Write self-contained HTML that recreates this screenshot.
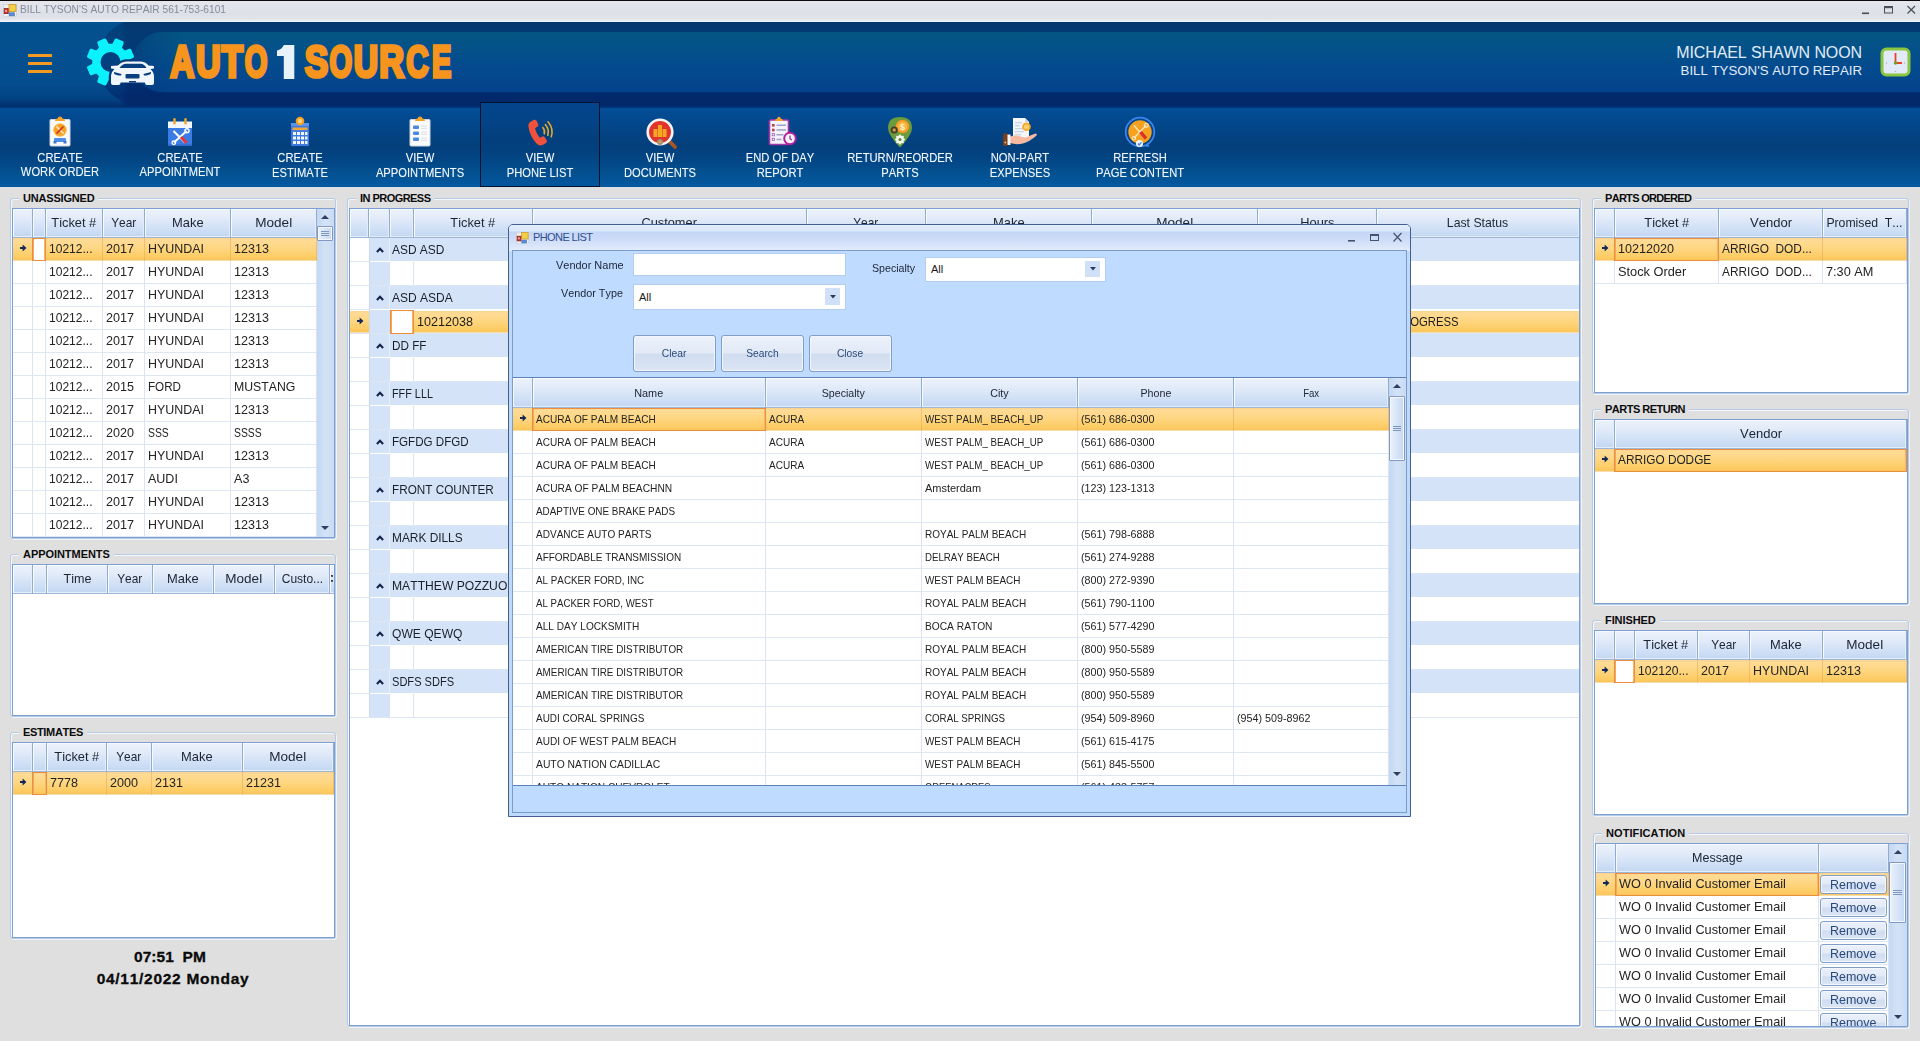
<!DOCTYPE html>
<html><head><meta charset="utf-8"><title>Auto 1 Source</title><style>
*{box-sizing:border-box;margin:0;padding:0}
html,body{width:1920px;height:1041px;overflow:hidden}
body{position:relative;background:#dfdfdf;font-family:"Liberation Sans",sans-serif;font-size:13px;color:#1c1c1c;font-kerning:none}
.a{position:absolute}
.x{display:inline-block;transform-origin:0 50%;white-space:pre}
.xc{display:inline-block;transform-origin:50% 50%;white-space:pre}
/* title bar */
#tb{left:0;top:0;width:1920px;height:22px;background:linear-gradient(#e4e6ec 0,#dde0e8 60%,#e2e4ea 85%,#eef6fc 100%);border-top:1px solid #0a0a0a}
#tb .t{left:20px;top:1px;font-size:11px;color:#848c98;line-height:14px;white-space:pre}
/* header */
#hd{left:0;top:22px;width:1920px;height:86px;background:linear-gradient(#03386c 0,#033a73 12px,#033878 40px,#022c6e 68px,#02296b 72px,#02286a 83px,#03377c 86px)}
#hdl{left:0;top:22px;width:128px;height:86px;background:linear-gradient(#04518f 0,#044d8e 62px,#034384 76px,#02316f 84px,#03377c 86px);-webkit-mask-image:linear-gradient(90deg,#000 0,#000 120px,transparent 128px);mask-image:linear-gradient(90deg,#000 0,#000 120px,transparent 128px)}
#hdc{left:0;top:22px;width:300px;height:86px;background:linear-gradient(#03386c 0,#033a73 12px,#033a7a 40px,#022c6e 68px,#02296b 72px,#02286a 83px,#03377c 86px);clip-path:circle(43px at 140px 40px);opacity:.7}
#pill{left:133px;top:32px;width:1787px;height:60px;border-radius:30px 0 0 30px;background:linear-gradient(90deg,rgba(3,56,118,.6),rgba(3,56,118,.25) 22px,rgba(3,56,118,0) 50px),linear-gradient(#045582 0,#04518a 18px,#044a8e 36px,#04438c 60px);box-shadow:0 0 2px rgba(4,75,140,.8)}
#tl{left:0;top:108px;width:1920px;height:79px;background:linear-gradient(#034e97 0,#03498e 12px,#034180 30px,#033f7b 38px,#034585 52px,#03508f 64px,#0459a2 79px)}
.ti{top:108px;width:120px;height:79px;text-align:center;color:#f2f8ff;font-size:13px;line-height:15px}
.ti .l{position:absolute;left:-40px;width:200px;top:42px;text-align:center;white-space:pre;transform:scaleX(.86);text-shadow:0 0 1px rgba(255,255,255,.35)}
.ti svg{position:absolute}
#sel{left:480px;top:102px;width:120px;height:85px;border:1px solid #04122e;background:linear-gradient(#03458c 0,#034488 14px,#033f7c 38px,#03427f 50px,#034f90 70px,#0457a0 84px)}
/* group boxes */
.gb{border:1px solid #b5cbe6;border-radius:3px;box-shadow:inset 1px 1px 0 #f4f7fb, 1px 1px 0 #f0f3f8}
.gt{font-weight:700;font-size:11px;line-height:13px;background:#dfdfdf;padding:0 4px 0 4px;white-space:pre;color:#0c0c0c;letter-spacing:-.2px}
.grid{border:1px solid #7d9fd2;background:#fff;overflow:hidden}
.h{top:0;height:29px;background:linear-gradient(#edf3fc 0,#e1eaf8 35%,#d0e0f6 70%,#c3d7f2 100%);border-right:1px solid #92abd0;border-bottom:1px solid #9eb6d8;box-shadow:inset 1px 1px 0 #f7faff,inset -1px -1px 0 #e4edfa;text-align:center;line-height:28px;font-size:13px;color:#1c2433;white-space:pre;overflow:hidden}
.r{left:0;height:23px;border-bottom:1px solid #dde6f3}
.c{top:0;height:23px;border-right:1px solid #dbe5f2;line-height:22px;padding-left:3px;white-space:pre;overflow:hidden;font-size:13px;color:#232323}

.sel{background:linear-gradient(#fbd38f 0,#fedb96 10%,#fed680 50%,#fdcb62 88%,#fbc45c 100%);border-bottom:1px solid #f5dfae}
.sel .c{border-right-color:rgba(230,170,90,.55)}
.foc{border:1px solid #ee8e3c!important;box-shadow:inset 1px 0 0 #f3a85c,inset -1px 0 0 #f6b66e}
.focw{border:1px solid #ee8e3c!important;box-shadow:inset 1px 0 0 #f3a85c,inset -1px 0 0 #f6b66e;background:#fff}
.ar{left:6.500px;top:6px}
/* scrollbars */
.sb{background:linear-gradient(90deg,#c4d8f2,#d3e2f6 50%,#c9dbf3);}
.th{border:1px solid #8299c2;border-radius:1px;background:linear-gradient(90deg,#eaf1fb,#d5e3f6 55%,#c6d8f1);box-shadow:inset 0 0 0 1px #f4f8fd}
.btn{border:1px solid #7f9ec9;border-radius:3px;background:linear-gradient(#ecf1fa 0,#e2eaf7 48%,#d0ddf0 52%,#dbe5f5 100%);box-shadow:inset 0 0 0 1px #f3f7fc;color:#2b4a7c;text-align:center;white-space:pre}
</style></head><body><div id="tb" class="a"><svg class="a" style="left:3px;top:2px" width="15" height="15" viewBox="0 0 15 15"><rect x="0.5" y="1.5" width="13" height="12" fill="#eef0f4" stroke="#c9ccd4" stroke-width=".6"/><rect x="6" y="1.6" width="7" height="7" fill="#f3cf48" stroke="#c89a26" stroke-width=".8"/><rect x="1.2" y="5.6" width="4" height="5" fill="#d23a35" stroke="#8e1c1a" stroke-width=".8"/><rect x="2.3" y="7" width="1.6" height="1.8" fill="#f6c9c6"/><rect x="6.2" y="9.8" width="5.2" height="3" fill="#5d8fe0" stroke="#3864b5" stroke-width=".6"/></svg><div class="a t"><span class="x" style="transform:scaleX(0.927)">BILL TYSON&#x27;S AUTO REPAIR 561-753-6101</span></div><svg class="a" style="left:1855px;top:0" width="65" height="21" viewBox="0 0 65 21"><rect x="7" y="11.5" width="7" height="1.6" fill="#4a4f5a"/><g fill="none" stroke="#4a4f5a"><rect x="29.5" y="5.500" width="8" height="6.500" stroke-width="1"/><rect x="29" y="5" width="9" height="2.200" fill="#4a4f5a" stroke="none"/></g><path d="M52.5 5 L60 12.5 M60 5 L52.5 12.5" stroke="#4a4f5a" stroke-width="1.2" fill="none"/></svg></div><div id="hd" class="a"></div><div id="hdl" class="a"></div><div id="hdc" class="a"></div><div id="pill" class="a"></div><div class="a" style="left:28px;top:54px;width:24px;height:3px;background:#f29a21"></div><div class="a" style="left:28px;top:62px;width:24px;height:3px;background:#f29a21"></div><div class="a" style="left:28px;top:70px;width:24px;height:3px;background:#f29a21"></div><svg class="a" style="left:86px;top:37px" width="76" height="54" viewBox="0 0 76 54"><defs><mask id="gm"><rect x="0" y="0" width="76" height="54" fill="#fff"/><circle cx="24.5" cy="25" r="10" fill="#000"/><g transform="translate(18 19)"><path d="M7 10 L14 9.500 Q17 6 22 5.500 H37 Q42 6 44.500 9.500 L50 10 V12.500 L46.500 13 Q50 16 50 21 V27 Q50 29 48 29 H43 Q41 29 41 27 V26.500 H16.500 V27 Q16.500 29 14.500 29 H9 Q7 29 7 27 V21 Q7 16 10.500 13 L7 12.500 Z" fill="#000" stroke="#000" stroke-width="4.500" stroke-linejoin="round"/><rect x="7" y="12" width="43" height="20" fill="#000"/></g></mask></defs><path d="M27.2 8.0 L29.9 2.8 L36.4 5.5 L34.6 11.1 L38.4 14.9 L44.0 13.1 L46.7 19.6 L41.5 22.3 L41.5 27.7 L46.7 30.4 L44.0 36.9 L38.4 35.1 L34.6 38.9 L36.4 44.5 L29.9 47.2 L27.2 42.0 L21.8 42.0 L19.1 47.2 L12.6 44.5 L14.4 38.9 L10.6 35.1 L5.0 36.9 L2.3 30.4 L7.5 27.7 L7.5 22.3 L2.3 19.6 L5.0 13.1 L10.6 14.9 L14.4 11.1 L12.6 5.5 L19.1 2.8 L21.8 8.0Z" fill="#0cf2fd" stroke="#0cf2fd" stroke-width="2.600" stroke-linejoin="round" mask="url(#gm)"/><g transform="translate(18 19)"><path d="M7 10 L14 9.500 Q17 6 22 5.500 H37 Q42 6 44.500 9.500 L50 10 V12.500 L46.500 13 Q50 16 50 21 V27 Q50 29 48 29 H43 Q41 29 41 27 V26.500 H16.500 V27 Q16.500 29 14.500 29 H9 Q7 29 7 27 V21 Q7 16 10.500 13 L7 12.500 Z" fill="#f1f6fc"/><path d="M15.500 12 Q18 8 22 7.800 H36.500 Q40.500 8 42.500 12 Z" fill="#0a3f7f"/><path d="M10 16 L17.500 18 L17 19.500 Q12 19.500 10 17.500Z M47 16 L39.500 18 L40 19.500 Q45 19.500 47 17.500Z" fill="#0a3f7f"/><rect x="21.500" y="18" width="14" height="4.500" rx="1" fill="#0a3f7f"/><rect x="25" y="25" width="7" height="1.500" fill="#0a3f7f"/></g></svg><svg class="a" style="left:160px;top:36px" width="310" height="56" viewBox="0 0 310 56"><g font-family="Liberation Sans" font-weight="700" font-size="44.19" stroke-linejoin="miter" stroke-width="3.6"><text x="10.37" y="41.10" textLength="24.00" lengthAdjust="spacingAndGlyphs" fill="#f7941d" stroke="#f7941d">A</text><text x="35.95" y="41.10" textLength="24.63" lengthAdjust="spacingAndGlyphs" fill="#f7941d" stroke="#f7941d">U</text><text x="61.51" y="41.10" textLength="21.47" lengthAdjust="spacingAndGlyphs" fill="#f7941d" stroke="#f7941d">T</text><text x="84.81" y="41.10" textLength="22.61" lengthAdjust="spacingAndGlyphs" fill="#f7941d" stroke="#f7941d">O</text><path d="M123.8 8.899999999999999 H134.3 V42.9 H123.8 V19.9 H117.0 V14.4 Q121.8 13.4 123.8 8.899999999999999Z" fill="#e8f2fb" stroke="none"/><text x="144.69" y="41.10" textLength="23.38" lengthAdjust="spacingAndGlyphs" fill="#f7941d" stroke="#f7941d">S</text><text x="169.51" y="41.10" textLength="22.61" lengthAdjust="spacingAndGlyphs" fill="#f7941d" stroke="#f7941d">O</text><text x="193.68" y="41.10" textLength="24.27" lengthAdjust="spacingAndGlyphs" fill="#f7941d" stroke="#f7941d">U</text><text x="219.30" y="41.10" textLength="24.80" lengthAdjust="spacingAndGlyphs" fill="#f7941d" stroke="#f7941d">R</text><text x="246.13" y="41.10" textLength="22.31" lengthAdjust="spacingAndGlyphs" fill="#f7941d" stroke="#f7941d">C</text><text x="272.07" y="41.10" textLength="19.26" lengthAdjust="spacingAndGlyphs" fill="#f7941d" stroke="#f7941d">E</text></g></svg><div class="a" style="left:1562px;top:43px;width:300px;text-align:right;color:#e2ecf8;font-size:16px;line-height:20px;white-space:pre;letter-spacing:-.1px">MICHAEL SHAWN NOON</div><div class="a" style="left:1562px;top:61.500px;width:300px;text-align:right;color:#e2ecf8;font-size:13.250px;line-height:18px;white-space:pre">BILL TYSON'S AUTO REPAIR</div><svg class="a" style="left:1880px;top:47px" width="31" height="30" viewBox="0 0 31 30"><rect x="2" y="2" width="27" height="26" rx="4.500" fill="#e2e9f7" stroke="#8cc63f" stroke-width="3"/><path d="M15.500 6 V16 H22" stroke="#ef4123" stroke-width="1.800" fill="none"/><circle cx="15.500" cy="16" r="1.700" fill="#6aa329"/><circle cx="15.500" cy="24.500" r=".7" fill="#a9b4c9"/><circle cx="6.500" cy="16" r=".7" fill="#a9b4c9"/><circle cx="24.500" cy="16" r=".7" fill="#a9b4c9"/></svg><div id="tl" class="a"></div><div id="sel" class="a"></div><div class="a ti" style="left:0px"><svg style="left:49px;top:8px" width="22" height="31" viewBox="0 0 22 31"><rect x="1" y="3.500" width="20" height="26.500" rx="1" fill="#fbfbfb" stroke="#cfd6e2" stroke-width="1"/><path d="M6 5 Q6 2.500 8.500 2.500 Q9 .5 11 .5 Q13 .5 13.500 2.500 Q16 2.500 16 5 Z" fill="#f4a428"/><circle cx="11" cy="14" r="6.300" fill="#f7a021"/><circle cx="11" cy="14" r="6.300" fill="none" stroke="#f9bf58" stroke-width="1"/><path d="M7.500 10.500 L14.500 17.500" stroke="#fde9c6" stroke-width="1.600"/><path d="M14.500 10.500 L7.500 17.500" stroke="#c9352b" stroke-width="1.700"/><rect x="5" y="22" width="12" height="4" rx="1" fill="#4e8ee6"/><rect x="4.500" y="25" width="3" height="2.500" fill="#3c78cf"/><rect x="14.500" y="25" width="3" height="2.500" fill="#3c78cf"/></svg><div class="l" style="top:42px;line-height:14px;margin-top:.7px">CREATE
WORK ORDER</div></div><div class="a ti" style="left:120px"><svg style="left:47px;top:9px" width="26" height="30" viewBox="0 0 26 30"><rect x="1" y="4.500" width="24" height="7" fill="#f4f6fa"/><rect x="1" y="11" width="24" height="18" fill="#3b7be3"/><rect x="1" y="27.500" width="24" height="1.500" fill="#2f68c9"/><rect x="6.300" y="1" width="2.400" height="6.500" rx="1.200" fill="#f4a428"/><rect x="17.300" y="1" width="2.400" height="6.500" rx="1.200" fill="#f4a428"/><path d="M6.500 14 L18 25.500" stroke="#fff" stroke-width="2"/><path d="M19.500 14 L7 25.500" stroke="#fff" stroke-width="2"/><path d="M14 20 L19.500 25.800" stroke="#e0383a" stroke-width="3.200"/><circle cx="20" cy="13.800" r="2" fill="none" stroke="#fff" stroke-width="1.400"/><circle cx="6.800" cy="25.800" r="1.800" fill="none" stroke="#fff" stroke-width="1.300"/></svg><div class="l" style="top:42px;line-height:14px;margin-top:.7px">CREATE
APPOINTMENT</div></div><div class="a ti" style="left:240px"><svg style="left:50px;top:8px" width="20" height="31" viewBox="0 0 20 31"><rect x="1" y="7" width="18" height="23" rx="1" fill="#3d7be0"/><rect x="1" y="7" width="18" height="3" fill="#5a92ea"/><circle cx="10" cy="5" r="4.300" fill="#f7a021"/><circle cx="10" cy="5" r="2.200" fill="#fcd37c"/><rect x="2.500" y="11.500" width="15" height="2.600" fill="#f2a63a"/><g fill="#f3f6fc"><rect x="3" y="16" width="3" height="3"/><rect x="7" y="16" width="3" height="3"/><rect x="11" y="16" width="3" height="3"/><rect x="15" y="16" width="2.500" height="3"/><rect x="3" y="20.500" width="3" height="3"/><rect x="7" y="20.500" width="3" height="3"/><rect x="11" y="20.500" width="3" height="3"/><rect x="15" y="20.500" width="2.500" height="3"/><rect x="3" y="25" width="3" height="3"/><rect x="7" y="25" width="3" height="3"/><rect x="11" y="25" width="3" height="3"/><rect x="15" y="25" width="2.500" height="3"/></g></svg><div class="l" style="top:42px">CREATE
ESTIMATE</div></div><div class="a ti" style="left:360px"><svg style="left:49px;top:8px" width="22" height="31" viewBox="0 0 22 31"><rect x="1" y="3.500" width="20" height="26.500" rx="1" fill="#fbfbfb" stroke="#cfd6e2" stroke-width="1"/><path d="M6 5 Q6 2.500 8.500 2.500 Q9 .5 11 .5 Q13 .5 13.500 2.500 Q16 2.500 16 5 Z" fill="#f4a428"/><g fill="#4b88e2"><rect x="4" y="9.500" width="6" height="3.600" rx="1"/><rect x="4" y="15.500" width="6" height="3.600" rx="1"/><rect x="4" y="21.500" width="6" height="3.600" rx="1"/></g><g fill="#dfe4ec"><rect x="12" y="9.500" width="6" height="1.200"/><rect x="12" y="11.800" width="6" height="1.200"/><rect x="12" y="15.500" width="6" height="1.200"/><rect x="12" y="17.800" width="6" height="1.200"/><rect x="12" y="21.500" width="6" height="1.200"/><rect x="12" y="23.800" width="6" height="1.200"/></g></svg><div class="l" style="top:42px">VIEW
APPOINTMENTS</div></div><div class="a ti" style="left:480px"><svg style="left:45px;top:10px" width="32" height="31" viewBox="0 0 32 31"><path d="M3.500 9 Q2.500 5.500 6 3.500 L9 1.800 Q10.500 1.200 11.500 2.800 L13.200 6.200 Q13.800 7.800 12.300 8.800 L10 10.200 Q11 15 14.800 19.800 L17.300 18.500 Q18.800 17.800 19.800 19.200 L21.800 22.500 Q22.500 24 21 25 L18 26.800 Q14.500 28.500 11.500 25.500 Q5 18.500 3.500 9 Z" fill="#f0513c"/><g fill="none" stroke="#e5a82e" stroke-width="1.600" stroke-linecap="round"><path d="M17.800 9.500 Q20.300 12 19.300 15.800"/><path d="M20.300 6.500 Q24.500 11.500 22.800 17.300"/><path d="M23 3.800 Q28.800 10.500 26.300 18.800"/></g></svg><div class="l" style="top:42px">VIEW
PHONE LIST</div></div><div class="a ti" style="left:600px"><svg style="left:45px;top:9px" width="34" height="32" viewBox="0 0 34 32"><path d="M22 22 L29 29" stroke="#f1f1f1" stroke-width="3"/><path d="M25.500 25.500 L30 30" stroke="#a8541f" stroke-width="3.800" stroke-linecap="round"/><circle cx="15" cy="15" r="12.300" fill="#e2342d" stroke="#f4f4f4" stroke-width="2.600"/><g fill="#f6a723"><rect x="8.500" y="12" width="4" height="8"/><rect x="13" y="8" width="4" height="12"/><rect x="17.500" y="12" width="4" height="8"/></g><circle cx="15" cy="25" r="3" fill="#9a8f7c"/><circle cx="15" cy="25" r="1.600" fill="#d4a24a"/></svg><div class="l" style="top:42px">VIEW
DOCUMENTS</div></div><div class="a ti" style="left:720px"><svg style="left:48px;top:8px" width="30" height="31" viewBox="0 0 30 31"><rect x="1.500" y="4" width="19" height="24.500" rx="1" fill="#f6f3fa" stroke="#a736a8" stroke-width="1.600"/><path d="M7 5 Q7 2.800 9 2.800 Q9.500 .8 11 .8 Q12.500 .8 13 2.800 Q15 2.800 15 5 Z" fill="#f4a428"/><g fill="#b4434f"><rect x="4" y="8" width="2.600" height="2.600"/><rect x="4" y="12.700" width="2.600" height="2.600"/></g><g fill="none" stroke="#9b59b6" stroke-width=".8"><rect x="4.200" y="17.600" width="2.200" height="2.200"/><rect x="4.200" y="22.300" width="2.200" height="2.200"/></g><g fill="#9aa3c9"><rect x="8.500" y="8.500" width="9.500" height="1.500"/><rect x="8.500" y="13.200" width="9.500" height="1.500"/><rect x="8.500" y="18" width="7" height="1.500"/><rect x="8.500" y="22.700" width="5" height="1.500"/></g><circle cx="22" cy="22.500" r="5.800" fill="#f7f1fa" stroke="#b0209f" stroke-width="2"/><path d="M22 19.500 V22.800 L23.800 24" stroke="#6c2a7a" stroke-width="1.100" fill="none"/></svg><div class="l" style="top:42px">END OF DAY
REPORT</div></div><div class="a ti" style="left:840px"><svg style="left:47px;top:8px" width="26" height="32" viewBox="0 0 26 32"><path d="M13 31.500 Q1 19 1 12 Q1 1 13 1 Q25 1 25 12 Q25 19 13 31.500 Z" fill="#6a9b3c"/><circle cx="15.500" cy="10.500" r="6.800" fill="#f19a26"/><circle cx="15.500" cy="10.500" r="5" fill="#f8b540"/><text x="15.500" y="14" font-family="Liberation Sans" font-weight="700" font-size="9" text-anchor="middle" fill="#fdf0cf">$</text><circle cx="7.200" cy="14" r="3.600" fill="#4a3a2c"/><circle cx="7.200" cy="14" r="1.700" fill="#c9a040"/><circle cx="13" cy="23.500" r="4" fill="#f4f6f0"/><circle cx="13" cy="23.500" r="1.700" fill="#6a9b3c"/><g stroke="#f4f6f0" stroke-width="1.600"><path d="M13 18.500 V28.500 M8 23.500 H18 M9.500 20 L16.500 27 M16.500 20 L9.500 27"/></g><circle cx="13" cy="23.500" r="1.600" fill="#5d8c33"/></svg><div class="l" style="top:42px">RETURN/REORDER
PARTS</div></div><div class="a ti" style="left:960px"><svg style="left:42px;top:9px" width="36" height="30" viewBox="0 0 36 30"><path d="M11 1 H23 L27 5 V21 H11 Z" fill="#f4f6fa"/><path d="M23 1 L27 5 H23 Z" fill="#cfd6e4"/><g fill="#c9d3e6"><rect x="13" y="5" width="7" height="1.300"/><rect x="13" y="8" width="5" height="1.300"/><rect x="13" y="11" width="9" height="1.300"/><rect x="13" y="14" width="9" height="1.300"/><rect x="13" y="17" width="6" height="1.300"/></g><circle cx="24.500" cy="9.800" r="4.300" fill="#f5a623"/><circle cx="24.500" cy="9.800" r="2.600" fill="#fbcf6e"/><path d="M8 19.500 Q14 17.500 19 19.800 L24 20.500 Q29 18 33.500 16.500 Q35.500 16.500 34.500 18.500 Q28 24.500 21 26.500 Q14 28 8 26 Z" fill="#f7b9a0"/><rect x="4.500" y="17.500" width="4" height="10.500" fill="#f4f6fa"/><rect x="1" y="16.500" width="4.500" height="12.500" rx="1" fill="#7a3e1e"/><circle cx="3.300" cy="25.500" r=".9" fill="#f5c66b"/></svg><div class="l" style="top:42px">NON-PART
EXPENSES</div></div><div class="a ti" style="left:1080px"><svg style="left:43px;top:8px" width="34" height="33" viewBox="0 0 34 33"><circle cx="17" cy="16" r="14.300" fill="none" stroke="#3f82ea" stroke-width="1.800"/><circle cx="17" cy="16" r="11.700" fill="#f6a11f"/><path d="M11 9.500 L22 22" stroke="#fde2b0" stroke-width="1.600"/><path d="M23 9.500 L11 22" stroke="#fde2b0" stroke-width="1.600"/><path d="M17.500 16 L23 22.500" stroke="#d8302f" stroke-width="3.400"/><circle cx="23.300" cy="9.200" r="1.900" fill="none" stroke="#fde2b0" stroke-width="1.300"/><circle cx="10.800" cy="22.300" r="1.700" fill="none" stroke="#fde2b0" stroke-width="1.200"/><circle cx="16.500" cy="27.500" r="3.600" fill="#f1f5fb"/><path d="M14.800 27.500 L16.200 29 L18.500 26.200" stroke="#3f82ea" stroke-width="1.200" fill="none"/><path d="M22 30.500 L26.500 30.800 L24.800 26.500 Z" fill="#3f82ea"/></svg><div class="l" style="top:42px">REFRESH
PAGE CONTENT</div></div><div class="a gb" style="left:10px;top:198px;width:326px;height:341px"></div><div class="a gt" style="left:19px;top:192px;letter-spacing:-0.19px">UNASSIGNED</div><div class="a grid" style="left:12px;top:208px;width:323px;height:330px"><div class="a h" style="left:0px;width:20px"></div><div class="a h" style="left:20px;width:13px"></div><div class="a h" style="left:33px;width:57px"><span class="xc" style="transform:scaleX(0.986)">Ticket #</span></div><div class="a h" style="left:90px;width:42px"><span class="xc" style="transform:scaleX(0.915)">Year</span></div><div class="a h" style="left:132px;width:86px"><span class="xc" style="transform:scaleX(0.993)">Make</span></div><div class="a h" style="left:218px;width:86px"><span class="xc" style="transform:scaleX(1.042)">Model</span></div><div class="a r sel" style="top:29px;width:304px;height:23px"><div class="a c" style="left:0px;width:20px;height:23px"><svg class="a ar" width="7" height="8" viewBox="0 0 8 9"><path d="M0 3.300 H3 V.6 L7.400 4.500 L3 8.400 V5.700 H0 Z" fill="#12275c"/></svg></div><div class="a c focw" style="left:19px;width:14px;height:23px;padding-left:3px;line-height:20px"></div><div class="a c" style="left:33px;width:57px;height:23px"><span class="x" style="transform:scaleX(0.926)">10212...</span></div><div class="a c" style="left:90px;width:42px;height:23px"><span class="x" style="transform:scaleX(0.969)">2017</span></div><div class="a c" style="left:132px;width:86px;height:23px"><span class="x" style="transform:scaleX(0.958)">HYUNDAI</span></div><div class="a c" style="left:218px;width:86px;height:23px"><span class="x" style="transform:scaleX(0.969)">12313</span></div></div><div class="a r" style="top:52px;width:304px;height:23px"><div class="a c" style="left:0px;width:20px;height:23px"></div><div class="a c" style="left:20px;width:13px;height:23px"></div><div class="a c" style="left:33px;width:57px;height:23px"><span class="x" style="transform:scaleX(0.926)">10212...</span></div><div class="a c" style="left:90px;width:42px;height:23px"><span class="x" style="transform:scaleX(0.969)">2017</span></div><div class="a c" style="left:132px;width:86px;height:23px"><span class="x" style="transform:scaleX(0.958)">HYUNDAI</span></div><div class="a c" style="left:218px;width:86px;height:23px"><span class="x" style="transform:scaleX(0.969)">12313</span></div></div><div class="a r" style="top:75px;width:304px;height:23px"><div class="a c" style="left:0px;width:20px;height:23px"></div><div class="a c" style="left:20px;width:13px;height:23px"></div><div class="a c" style="left:33px;width:57px;height:23px"><span class="x" style="transform:scaleX(0.926)">10212...</span></div><div class="a c" style="left:90px;width:42px;height:23px"><span class="x" style="transform:scaleX(0.969)">2017</span></div><div class="a c" style="left:132px;width:86px;height:23px"><span class="x" style="transform:scaleX(0.958)">HYUNDAI</span></div><div class="a c" style="left:218px;width:86px;height:23px"><span class="x" style="transform:scaleX(0.969)">12313</span></div></div><div class="a r" style="top:98px;width:304px;height:23px"><div class="a c" style="left:0px;width:20px;height:23px"></div><div class="a c" style="left:20px;width:13px;height:23px"></div><div class="a c" style="left:33px;width:57px;height:23px"><span class="x" style="transform:scaleX(0.926)">10212...</span></div><div class="a c" style="left:90px;width:42px;height:23px"><span class="x" style="transform:scaleX(0.969)">2017</span></div><div class="a c" style="left:132px;width:86px;height:23px"><span class="x" style="transform:scaleX(0.958)">HYUNDAI</span></div><div class="a c" style="left:218px;width:86px;height:23px"><span class="x" style="transform:scaleX(0.969)">12313</span></div></div><div class="a r" style="top:121px;width:304px;height:23px"><div class="a c" style="left:0px;width:20px;height:23px"></div><div class="a c" style="left:20px;width:13px;height:23px"></div><div class="a c" style="left:33px;width:57px;height:23px"><span class="x" style="transform:scaleX(0.926)">10212...</span></div><div class="a c" style="left:90px;width:42px;height:23px"><span class="x" style="transform:scaleX(0.969)">2017</span></div><div class="a c" style="left:132px;width:86px;height:23px"><span class="x" style="transform:scaleX(0.958)">HYUNDAI</span></div><div class="a c" style="left:218px;width:86px;height:23px"><span class="x" style="transform:scaleX(0.969)">12313</span></div></div><div class="a r" style="top:144px;width:304px;height:23px"><div class="a c" style="left:0px;width:20px;height:23px"></div><div class="a c" style="left:20px;width:13px;height:23px"></div><div class="a c" style="left:33px;width:57px;height:23px"><span class="x" style="transform:scaleX(0.926)">10212...</span></div><div class="a c" style="left:90px;width:42px;height:23px"><span class="x" style="transform:scaleX(0.969)">2017</span></div><div class="a c" style="left:132px;width:86px;height:23px"><span class="x" style="transform:scaleX(0.958)">HYUNDAI</span></div><div class="a c" style="left:218px;width:86px;height:23px"><span class="x" style="transform:scaleX(0.969)">12313</span></div></div><div class="a r" style="top:167px;width:304px;height:23px"><div class="a c" style="left:0px;width:20px;height:23px"></div><div class="a c" style="left:20px;width:13px;height:23px"></div><div class="a c" style="left:33px;width:57px;height:23px"><span class="x" style="transform:scaleX(0.926)">10212...</span></div><div class="a c" style="left:90px;width:42px;height:23px"><span class="x" style="transform:scaleX(0.969)">2015</span></div><div class="a c" style="left:132px;width:86px;height:23px"><span class="x" style="transform:scaleX(0.897)">FORD</span></div><div class="a c" style="left:218px;width:86px;height:23px"><span class="x" style="transform:scaleX(0.944)">MUSTANG</span></div></div><div class="a r" style="top:190px;width:304px;height:23px"><div class="a c" style="left:0px;width:20px;height:23px"></div><div class="a c" style="left:20px;width:13px;height:23px"></div><div class="a c" style="left:33px;width:57px;height:23px"><span class="x" style="transform:scaleX(0.926)">10212...</span></div><div class="a c" style="left:90px;width:42px;height:23px"><span class="x" style="transform:scaleX(0.969)">2017</span></div><div class="a c" style="left:132px;width:86px;height:23px"><span class="x" style="transform:scaleX(0.958)">HYUNDAI</span></div><div class="a c" style="left:218px;width:86px;height:23px"><span class="x" style="transform:scaleX(0.969)">12313</span></div></div><div class="a r" style="top:213px;width:304px;height:23px"><div class="a c" style="left:0px;width:20px;height:23px"></div><div class="a c" style="left:20px;width:13px;height:23px"></div><div class="a c" style="left:33px;width:57px;height:23px"><span class="x" style="transform:scaleX(0.926)">10212...</span></div><div class="a c" style="left:90px;width:42px;height:23px"><span class="x" style="transform:scaleX(0.969)">2020</span></div><div class="a c" style="left:132px;width:86px;height:23px"><span class="x" style="transform:scaleX(0.796)">SSS</span></div><div class="a c" style="left:218px;width:86px;height:23px"><span class="x" style="transform:scaleX(0.796)">SSSS</span></div></div><div class="a r" style="top:236px;width:304px;height:23px"><div class="a c" style="left:0px;width:20px;height:23px"></div><div class="a c" style="left:20px;width:13px;height:23px"></div><div class="a c" style="left:33px;width:57px;height:23px"><span class="x" style="transform:scaleX(0.926)">10212...</span></div><div class="a c" style="left:90px;width:42px;height:23px"><span class="x" style="transform:scaleX(0.969)">2017</span></div><div class="a c" style="left:132px;width:86px;height:23px"><span class="x" style="transform:scaleX(0.958)">HYUNDAI</span></div><div class="a c" style="left:218px;width:86px;height:23px"><span class="x" style="transform:scaleX(0.969)">12313</span></div></div><div class="a r" style="top:259px;width:304px;height:23px"><div class="a c" style="left:0px;width:20px;height:23px"></div><div class="a c" style="left:20px;width:13px;height:23px"></div><div class="a c" style="left:33px;width:57px;height:23px"><span class="x" style="transform:scaleX(0.926)">10212...</span></div><div class="a c" style="left:90px;width:42px;height:23px"><span class="x" style="transform:scaleX(0.969)">2017</span></div><div class="a c" style="left:132px;width:86px;height:23px"><span class="x" style="transform:scaleX(0.962)">AUDI</span></div><div class="a c" style="left:218px;width:86px;height:23px"><span class="x" style="transform:scaleX(0.968)">A3</span></div></div><div class="a r" style="top:282px;width:304px;height:23px"><div class="a c" style="left:0px;width:20px;height:23px"></div><div class="a c" style="left:20px;width:13px;height:23px"></div><div class="a c" style="left:33px;width:57px;height:23px"><span class="x" style="transform:scaleX(0.926)">10212...</span></div><div class="a c" style="left:90px;width:42px;height:23px"><span class="x" style="transform:scaleX(0.969)">2017</span></div><div class="a c" style="left:132px;width:86px;height:23px"><span class="x" style="transform:scaleX(0.958)">HYUNDAI</span></div><div class="a c" style="left:218px;width:86px;height:23px"><span class="x" style="transform:scaleX(0.969)">12313</span></div></div><div class="a r" style="top:305px;width:304px;height:23px"><div class="a c" style="left:0px;width:20px;height:23px"></div><div class="a c" style="left:20px;width:13px;height:23px"></div><div class="a c" style="left:33px;width:57px;height:23px"><span class="x" style="transform:scaleX(0.926)">10212...</span></div><div class="a c" style="left:90px;width:42px;height:23px"><span class="x" style="transform:scaleX(0.969)">2017</span></div><div class="a c" style="left:132px;width:86px;height:23px"><span class="x" style="transform:scaleX(0.958)">HYUNDAI</span></div><div class="a c" style="left:218px;width:86px;height:23px"><span class="x" style="transform:scaleX(0.969)">12313</span></div></div><div class="a sb" style="left:304px;top:0px;width:17px;height:328px"><svg class="a" style="left:4px;top:6px" width="8" height="4" viewBox="0 0 8 4"><path d="M0 4 L4 0 L8 4Z" fill="#2d3f63"/></svg><svg class="a" style="left:4px;top:317px" width="8" height="4" viewBox="0 0 8 4"><path d="M0 0 L4 4 L8 0Z" fill="#2d3f63"/></svg><div class="a th" style="left:0;top:17px;width:16px;height:15px"><div class="a" style="left:3px;top:4px;width:8px;height:1px;background:#7f97bd"></div><div class="a" style="left:3px;top:6px;width:8px;height:1px;background:#7f97bd"></div><div class="a" style="left:3px;top:8px;width:8px;height:1px;background:#7f97bd"></div></div></div></div><div class="a gb" style="left:10px;top:554px;width:326px;height:163px"></div><div class="a gt" style="left:19px;top:548px;letter-spacing:-0.05px">APPOINTMENTS</div><div class="a grid" style="left:12px;top:564px;width:323px;height:152px"><div class="a h" style="left:0px;width:20px"></div><div class="a h" style="left:20px;width:14px"></div><div class="a h" style="left:34px;width:61px"><span class="xc" style="transform:scaleX(0.968)">Time</span></div><div class="a h" style="left:95px;width:45px"><span class="xc" style="transform:scaleX(0.915)">Year</span></div><div class="a h" style="left:140px;width:61px"><span class="xc" style="transform:scaleX(0.993)">Make</span></div><div class="a h" style="left:201px;width:61px"><span class="xc" style="transform:scaleX(1.042)">Model</span></div><div class="a h" style="left:262px;width:55px"><span class="xc" style="transform:scaleX(0.924)">Custo...</span></div><div class="a h" style="left:317px;width:6px"></div><div class="a" style="left:318px;top:10px;width:1px;height:1px;background:#222;box-shadow:0 5px 0 #222"></div><div class="a" style="left:318px;top:10px;width:2px;height:2px;background:#2a2a2a;opacity:.75"></div><div class="a" style="left:318px;top:15px;width:2px;height:2px;background:#2a2a2a;opacity:.75"></div></div><div class="a gb" style="left:10px;top:732px;width:326px;height:207px"></div><div class="a gt" style="left:19px;top:726px;letter-spacing:-0.34px">ESTIMATES</div><div class="a grid" style="left:12px;top:742px;width:323px;height:196px"><div class="a h" style="left:0px;width:20px"></div><div class="a h" style="left:20px;width:14px"></div><div class="a h" style="left:34px;width:60px"><span class="xc" style="transform:scaleX(0.986)">Ticket #</span></div><div class="a h" style="left:94px;width:45px"><span class="xc" style="transform:scaleX(0.915)">Year</span></div><div class="a h" style="left:139px;width:91px"><span class="xc" style="transform:scaleX(0.993)">Make</span></div><div class="a h" style="left:230px;width:91px"><span class="xc" style="transform:scaleX(1.042)">Model</span></div><div class="a r sel" style="top:29px;width:321px;height:23px"><div class="a c" style="left:0px;width:20px;height:23px"><svg class="a ar" width="7" height="8" viewBox="0 0 8 9"><path d="M0 3.300 H3 V.6 L7.400 4.500 L3 8.400 V5.700 H0 Z" fill="#12275c"/></svg></div><div class="a c foc" style="left:19px;width:15px;height:23px;padding-left:3px;line-height:20px"></div><div class="a c" style="left:34px;width:60px;height:23px"><span class="x" style="transform:scaleX(0.969)">7778</span></div><div class="a c" style="left:94px;width:45px;height:23px"><span class="x" style="transform:scaleX(0.969)">2000</span></div><div class="a c" style="left:139px;width:91px;height:23px"><span class="x" style="transform:scaleX(0.969)">2131</span></div><div class="a c" style="left:230px;width:91px;height:23px"><span class="x" style="transform:scaleX(0.969)">21231</span></div></div></div><div class="a" style="left:0;top:947px;width:340px;text-align:center;font-weight:700;font-size:15.500px;line-height:20px;white-space:pre;color:#0a0a0a;letter-spacing:.05px;-webkit-text-stroke:.3px #0a0a0a">07:51  PM</div><div class="a" style="left:0;top:969px;width:346px;text-align:center;font-weight:700;font-size:15.500px;line-height:20px;white-space:pre;color:#0a0a0a;letter-spacing:.72px;-webkit-text-stroke:.3px #0a0a0a">04/11/2022 Monday</div><div class="a gb" style="left:347px;top:198px;width:1234px;height:829px"></div><div class="a gt" style="left:356px;top:192px;letter-spacing:-0.54px">IN PROGRESS</div><div class="a grid" style="left:349px;top:208px;width:1231px;height:818px"><div class="a h" style="left:0px;width:19px;height:29px;line-height:28px"></div><div class="a h" style="left:19px;width:21px;height:29px;line-height:28px"></div><div class="a h" style="left:40px;width:24px;height:29px;line-height:28px"></div><div class="a h" style="left:64px;width:119px;height:29px;line-height:28px"><span class="xc" style="transform:scaleX(0.986)">Ticket #</span></div><div class="a h" style="left:183px;width:274px;height:29px;line-height:28px"><span class="xc" style="transform:scaleX(0.984)">Customer</span></div><div class="a h" style="left:457px;width:119px;height:29px;line-height:28px"><span class="xc" style="transform:scaleX(0.915)">Year</span></div><div class="a h" style="left:576px;width:166px;height:29px;line-height:28px"><span class="xc" style="transform:scaleX(0.993)">Make</span></div><div class="a h" style="left:742px;width:166px;height:29px;line-height:28px"><span class="xc" style="transform:scaleX(1.042)">Model</span></div><div class="a h" style="left:908px;width:119px;height:29px;line-height:28px"><span class="xc" style="transform:scaleX(0.987)">Hours</span></div><div class="a h" style="left:1027px;width:203px;height:29px;line-height:28px"><span class="xc" style="transform:scaleX(0.944)">Last Status</span></div><div class="a" style="left:0;top:29px;width:1230px;height:24px;background:#fff"><div class="a" style="left:19px;top:0;width:1px;height:24px;background:#cdd9ec"></div><div class="a" style="left:20px;top:0;width:1210px;height:23px;background:#d4e3f8"></div><div class="a" style="left:0;top:23px;width:19px;height:1px;background:#dde6f3"></div><div class="a" style="left:39px;top:0;width:1px;height:23px;background:#e6eefb"></div><div class="a" style="left:19px;top:0;width:21px;height:23px"><svg class="a" style="left:7px;top:9px" width="8" height="6" viewBox="0 0 8 6"><path d="M.9 5 L4 1.700 L7.100 5" fill="none" stroke="#14264f" stroke-width="2.100"/></svg></div><div class="a" style="left:42px;top:0;line-height:24px;font-size:13px;white-space:pre;color:#1b1f2a"><span class="x" style="transform:scaleX(0.918)">ASD ASD</span></div></div><div class="a" style="left:0;top:53px;width:1230px;height:24px;background:#fff"><div class="a" style="left:19px;top:0;width:1px;height:24px;background:#cdd9ec"></div><div class="a" style="left:20px;top:0;width:20px;height:24px;background:#d4e3f8"></div><div class="a" style="left:0;top:23px;width:1230px;height:1px;background:#dde6f3"></div><div class="a" style="left:63px;top:0;width:1px;height:23px;background:#dbe5f2"></div><div class="a" style="left:182px;top:0;width:1px;height:23px;background:#dbe5f2"></div><div class="a" style="left:456px;top:0;width:1px;height:23px;background:#dbe5f2"></div><div class="a" style="left:575px;top:0;width:1px;height:23px;background:#dbe5f2"></div><div class="a" style="left:741px;top:0;width:1px;height:23px;background:#dbe5f2"></div><div class="a" style="left:907px;top:0;width:1px;height:23px;background:#dbe5f2"></div><div class="a" style="left:1026px;top:0;width:1px;height:23px;background:#dbe5f2"></div><div class="a" style="left:1229px;top:0;width:1px;height:23px;background:#dbe5f2"></div></div><div class="a" style="left:0;top:77px;width:1230px;height:24px;background:#fff"><div class="a" style="left:19px;top:0;width:1px;height:24px;background:#cdd9ec"></div><div class="a" style="left:20px;top:0;width:1210px;height:23px;background:#d4e3f8"></div><div class="a" style="left:0;top:23px;width:19px;height:1px;background:#dde6f3"></div><div class="a" style="left:39px;top:0;width:1px;height:23px;background:#e6eefb"></div><div class="a" style="left:19px;top:0;width:21px;height:23px"><svg class="a" style="left:7px;top:9px" width="8" height="6" viewBox="0 0 8 6"><path d="M.9 5 L4 1.700 L7.100 5" fill="none" stroke="#14264f" stroke-width="2.100"/></svg></div><div class="a" style="left:42px;top:0;line-height:24px;font-size:13px;white-space:pre;color:#1b1f2a"><span class="x" style="transform:scaleX(0.924)">ASD ASDA</span></div></div><div class="a" style="left:0;top:101px;width:1230px;height:24px;background:#fff"><div class="a" style="left:19px;top:0;width:1px;height:24px;background:#cdd9ec"></div><div class="a" style="left:20px;top:0;width:20px;height:24px;background:#d4e3f8"></div><div class="a" style="left:0;top:23px;width:1230px;height:1px;background:#dde6f3"></div><div class="a sel" style="left:0;top:1px;width:19px;height:22px"></div><div class="a sel" style="left:40px;top:1px;width:1190px;height:22px"></div><div class="a" style="left:0;top:1px;width:19px;height:23px"><svg class="a ar" width="7" height="8" viewBox="0 0 8 9"><path d="M0 3.300 H3 V.6 L7.400 4.500 L3 8.400 V5.700 H0 Z" fill="#12275c"/></svg></div><div class="a focw" style="left:40px;top:0;width:24px;height:24px"></div><div class="a" style="left:67px;top:0;line-height:24px;font-size:13px;white-space:pre"><span class="x" style="transform:scaleX(0.969)">10212038</span></div><div class="a" style="left:1030px;top:0;line-height:24px;font-size:13px;white-space:pre"><span class="x" style="transform:scaleX(0.871)">IN PROGRESS</span></div></div><div class="a" style="left:0;top:125px;width:1230px;height:24px;background:#fff"><div class="a" style="left:19px;top:0;width:1px;height:24px;background:#cdd9ec"></div><div class="a" style="left:20px;top:0;width:1210px;height:23px;background:#d4e3f8"></div><div class="a" style="left:0;top:23px;width:19px;height:1px;background:#dde6f3"></div><div class="a" style="left:39px;top:0;width:1px;height:23px;background:#e6eefb"></div><div class="a" style="left:19px;top:0;width:21px;height:23px"><svg class="a" style="left:7px;top:9px" width="8" height="6" viewBox="0 0 8 6"><path d="M.9 5 L4 1.700 L7.100 5" fill="none" stroke="#14264f" stroke-width="2.100"/></svg></div><div class="a" style="left:42px;top:0;line-height:24px;font-size:13px;white-space:pre;color:#1b1f2a"><span class="x" style="transform:scaleX(0.901)">DD FF</span></div></div><div class="a" style="left:0;top:149px;width:1230px;height:24px;background:#fff"><div class="a" style="left:19px;top:0;width:1px;height:24px;background:#cdd9ec"></div><div class="a" style="left:20px;top:0;width:20px;height:24px;background:#d4e3f8"></div><div class="a" style="left:0;top:23px;width:1230px;height:1px;background:#dde6f3"></div><div class="a" style="left:63px;top:0;width:1px;height:23px;background:#dbe5f2"></div><div class="a" style="left:182px;top:0;width:1px;height:23px;background:#dbe5f2"></div><div class="a" style="left:456px;top:0;width:1px;height:23px;background:#dbe5f2"></div><div class="a" style="left:575px;top:0;width:1px;height:23px;background:#dbe5f2"></div><div class="a" style="left:741px;top:0;width:1px;height:23px;background:#dbe5f2"></div><div class="a" style="left:907px;top:0;width:1px;height:23px;background:#dbe5f2"></div><div class="a" style="left:1026px;top:0;width:1px;height:23px;background:#dbe5f2"></div><div class="a" style="left:1229px;top:0;width:1px;height:23px;background:#dbe5f2"></div></div><div class="a" style="left:0;top:173px;width:1230px;height:24px;background:#fff"><div class="a" style="left:19px;top:0;width:1px;height:24px;background:#cdd9ec"></div><div class="a" style="left:20px;top:0;width:1210px;height:23px;background:#d4e3f8"></div><div class="a" style="left:0;top:23px;width:19px;height:1px;background:#dde6f3"></div><div class="a" style="left:39px;top:0;width:1px;height:23px;background:#e6eefb"></div><div class="a" style="left:19px;top:0;width:21px;height:23px"><svg class="a" style="left:7px;top:9px" width="8" height="6" viewBox="0 0 8 6"><path d="M.9 5 L4 1.700 L7.100 5" fill="none" stroke="#14264f" stroke-width="2.100"/></svg></div><div class="a" style="left:42px;top:0;line-height:24px;font-size:13px;white-space:pre;color:#1b1f2a"><span class="x" style="transform:scaleX(0.833)">FFF LLL</span></div></div><div class="a" style="left:0;top:197px;width:1230px;height:24px;background:#fff"><div class="a" style="left:19px;top:0;width:1px;height:24px;background:#cdd9ec"></div><div class="a" style="left:20px;top:0;width:20px;height:24px;background:#d4e3f8"></div><div class="a" style="left:0;top:23px;width:1230px;height:1px;background:#dde6f3"></div><div class="a" style="left:63px;top:0;width:1px;height:23px;background:#dbe5f2"></div><div class="a" style="left:182px;top:0;width:1px;height:23px;background:#dbe5f2"></div><div class="a" style="left:456px;top:0;width:1px;height:23px;background:#dbe5f2"></div><div class="a" style="left:575px;top:0;width:1px;height:23px;background:#dbe5f2"></div><div class="a" style="left:741px;top:0;width:1px;height:23px;background:#dbe5f2"></div><div class="a" style="left:907px;top:0;width:1px;height:23px;background:#dbe5f2"></div><div class="a" style="left:1026px;top:0;width:1px;height:23px;background:#dbe5f2"></div><div class="a" style="left:1229px;top:0;width:1px;height:23px;background:#dbe5f2"></div></div><div class="a" style="left:0;top:221px;width:1230px;height:24px;background:#fff"><div class="a" style="left:19px;top:0;width:1px;height:24px;background:#cdd9ec"></div><div class="a" style="left:20px;top:0;width:1210px;height:23px;background:#d4e3f8"></div><div class="a" style="left:0;top:23px;width:19px;height:1px;background:#dde6f3"></div><div class="a" style="left:39px;top:0;width:1px;height:23px;background:#e6eefb"></div><div class="a" style="left:19px;top:0;width:21px;height:23px"><svg class="a" style="left:7px;top:9px" width="8" height="6" viewBox="0 0 8 6"><path d="M.9 5 L4 1.700 L7.100 5" fill="none" stroke="#14264f" stroke-width="2.100"/></svg></div><div class="a" style="left:42px;top:0;line-height:24px;font-size:13px;white-space:pre;color:#1b1f2a"><span class="x" style="transform:scaleX(0.893)">FGFDG DFGD</span></div></div><div class="a" style="left:0;top:245px;width:1230px;height:24px;background:#fff"><div class="a" style="left:19px;top:0;width:1px;height:24px;background:#cdd9ec"></div><div class="a" style="left:20px;top:0;width:20px;height:24px;background:#d4e3f8"></div><div class="a" style="left:0;top:23px;width:1230px;height:1px;background:#dde6f3"></div><div class="a" style="left:63px;top:0;width:1px;height:23px;background:#dbe5f2"></div><div class="a" style="left:182px;top:0;width:1px;height:23px;background:#dbe5f2"></div><div class="a" style="left:456px;top:0;width:1px;height:23px;background:#dbe5f2"></div><div class="a" style="left:575px;top:0;width:1px;height:23px;background:#dbe5f2"></div><div class="a" style="left:741px;top:0;width:1px;height:23px;background:#dbe5f2"></div><div class="a" style="left:907px;top:0;width:1px;height:23px;background:#dbe5f2"></div><div class="a" style="left:1026px;top:0;width:1px;height:23px;background:#dbe5f2"></div><div class="a" style="left:1229px;top:0;width:1px;height:23px;background:#dbe5f2"></div></div><div class="a" style="left:0;top:269px;width:1230px;height:24px;background:#fff"><div class="a" style="left:19px;top:0;width:1px;height:24px;background:#cdd9ec"></div><div class="a" style="left:20px;top:0;width:1210px;height:23px;background:#d4e3f8"></div><div class="a" style="left:0;top:23px;width:19px;height:1px;background:#dde6f3"></div><div class="a" style="left:39px;top:0;width:1px;height:23px;background:#e6eefb"></div><div class="a" style="left:19px;top:0;width:21px;height:23px"><svg class="a" style="left:7px;top:9px" width="8" height="6" viewBox="0 0 8 6"><path d="M.9 5 L4 1.700 L7.100 5" fill="none" stroke="#14264f" stroke-width="2.100"/></svg></div><div class="a" style="left:42px;top:0;line-height:24px;font-size:13px;white-space:pre;color:#1b1f2a"><span class="x" style="transform:scaleX(0.903)">FRONT COUNTER</span></div></div><div class="a" style="left:0;top:293px;width:1230px;height:24px;background:#fff"><div class="a" style="left:19px;top:0;width:1px;height:24px;background:#cdd9ec"></div><div class="a" style="left:20px;top:0;width:20px;height:24px;background:#d4e3f8"></div><div class="a" style="left:0;top:23px;width:1230px;height:1px;background:#dde6f3"></div><div class="a" style="left:63px;top:0;width:1px;height:23px;background:#dbe5f2"></div><div class="a" style="left:182px;top:0;width:1px;height:23px;background:#dbe5f2"></div><div class="a" style="left:456px;top:0;width:1px;height:23px;background:#dbe5f2"></div><div class="a" style="left:575px;top:0;width:1px;height:23px;background:#dbe5f2"></div><div class="a" style="left:741px;top:0;width:1px;height:23px;background:#dbe5f2"></div><div class="a" style="left:907px;top:0;width:1px;height:23px;background:#dbe5f2"></div><div class="a" style="left:1026px;top:0;width:1px;height:23px;background:#dbe5f2"></div><div class="a" style="left:1229px;top:0;width:1px;height:23px;background:#dbe5f2"></div></div><div class="a" style="left:0;top:317px;width:1230px;height:24px;background:#fff"><div class="a" style="left:19px;top:0;width:1px;height:24px;background:#cdd9ec"></div><div class="a" style="left:20px;top:0;width:1210px;height:23px;background:#d4e3f8"></div><div class="a" style="left:0;top:23px;width:19px;height:1px;background:#dde6f3"></div><div class="a" style="left:39px;top:0;width:1px;height:23px;background:#e6eefb"></div><div class="a" style="left:19px;top:0;width:21px;height:23px"><svg class="a" style="left:7px;top:9px" width="8" height="6" viewBox="0 0 8 6"><path d="M.9 5 L4 1.700 L7.100 5" fill="none" stroke="#14264f" stroke-width="2.100"/></svg></div><div class="a" style="left:42px;top:0;line-height:24px;font-size:13px;white-space:pre;color:#1b1f2a"><span class="x" style="transform:scaleX(0.914)">MARK DILLS</span></div></div><div class="a" style="left:0;top:341px;width:1230px;height:24px;background:#fff"><div class="a" style="left:19px;top:0;width:1px;height:24px;background:#cdd9ec"></div><div class="a" style="left:20px;top:0;width:20px;height:24px;background:#d4e3f8"></div><div class="a" style="left:0;top:23px;width:1230px;height:1px;background:#dde6f3"></div><div class="a" style="left:63px;top:0;width:1px;height:23px;background:#dbe5f2"></div><div class="a" style="left:182px;top:0;width:1px;height:23px;background:#dbe5f2"></div><div class="a" style="left:456px;top:0;width:1px;height:23px;background:#dbe5f2"></div><div class="a" style="left:575px;top:0;width:1px;height:23px;background:#dbe5f2"></div><div class="a" style="left:741px;top:0;width:1px;height:23px;background:#dbe5f2"></div><div class="a" style="left:907px;top:0;width:1px;height:23px;background:#dbe5f2"></div><div class="a" style="left:1026px;top:0;width:1px;height:23px;background:#dbe5f2"></div><div class="a" style="left:1229px;top:0;width:1px;height:23px;background:#dbe5f2"></div></div><div class="a" style="left:0;top:365px;width:1230px;height:24px;background:#fff"><div class="a" style="left:19px;top:0;width:1px;height:24px;background:#cdd9ec"></div><div class="a" style="left:20px;top:0;width:1210px;height:23px;background:#d4e3f8"></div><div class="a" style="left:0;top:23px;width:19px;height:1px;background:#dde6f3"></div><div class="a" style="left:39px;top:0;width:1px;height:23px;background:#e6eefb"></div><div class="a" style="left:19px;top:0;width:21px;height:23px"><svg class="a" style="left:7px;top:9px" width="8" height="6" viewBox="0 0 8 6"><path d="M.9 5 L4 1.700 L7.100 5" fill="none" stroke="#14264f" stroke-width="2.100"/></svg></div><div class="a" style="left:42px;top:0;line-height:24px;font-size:13px;white-space:pre;color:#1b1f2a"><span class="x" style="transform:scaleX(0.934)">MATTHEW POZZUOLI</span></div></div><div class="a" style="left:0;top:389px;width:1230px;height:24px;background:#fff"><div class="a" style="left:19px;top:0;width:1px;height:24px;background:#cdd9ec"></div><div class="a" style="left:20px;top:0;width:20px;height:24px;background:#d4e3f8"></div><div class="a" style="left:0;top:23px;width:1230px;height:1px;background:#dde6f3"></div><div class="a" style="left:63px;top:0;width:1px;height:23px;background:#dbe5f2"></div><div class="a" style="left:182px;top:0;width:1px;height:23px;background:#dbe5f2"></div><div class="a" style="left:456px;top:0;width:1px;height:23px;background:#dbe5f2"></div><div class="a" style="left:575px;top:0;width:1px;height:23px;background:#dbe5f2"></div><div class="a" style="left:741px;top:0;width:1px;height:23px;background:#dbe5f2"></div><div class="a" style="left:907px;top:0;width:1px;height:23px;background:#dbe5f2"></div><div class="a" style="left:1026px;top:0;width:1px;height:23px;background:#dbe5f2"></div><div class="a" style="left:1229px;top:0;width:1px;height:23px;background:#dbe5f2"></div></div><div class="a" style="left:0;top:413px;width:1230px;height:24px;background:#fff"><div class="a" style="left:19px;top:0;width:1px;height:24px;background:#cdd9ec"></div><div class="a" style="left:20px;top:0;width:1210px;height:23px;background:#d4e3f8"></div><div class="a" style="left:0;top:23px;width:19px;height:1px;background:#dde6f3"></div><div class="a" style="left:39px;top:0;width:1px;height:23px;background:#e6eefb"></div><div class="a" style="left:19px;top:0;width:21px;height:23px"><svg class="a" style="left:7px;top:9px" width="8" height="6" viewBox="0 0 8 6"><path d="M.9 5 L4 1.700 L7.100 5" fill="none" stroke="#14264f" stroke-width="2.100"/></svg></div><div class="a" style="left:42px;top:0;line-height:24px;font-size:13px;white-space:pre;color:#1b1f2a"><span class="x" style="transform:scaleX(0.929)">QWE QEWQ</span></div></div><div class="a" style="left:0;top:437px;width:1230px;height:24px;background:#fff"><div class="a" style="left:19px;top:0;width:1px;height:24px;background:#cdd9ec"></div><div class="a" style="left:20px;top:0;width:20px;height:24px;background:#d4e3f8"></div><div class="a" style="left:0;top:23px;width:1230px;height:1px;background:#dde6f3"></div><div class="a" style="left:63px;top:0;width:1px;height:23px;background:#dbe5f2"></div><div class="a" style="left:182px;top:0;width:1px;height:23px;background:#dbe5f2"></div><div class="a" style="left:456px;top:0;width:1px;height:23px;background:#dbe5f2"></div><div class="a" style="left:575px;top:0;width:1px;height:23px;background:#dbe5f2"></div><div class="a" style="left:741px;top:0;width:1px;height:23px;background:#dbe5f2"></div><div class="a" style="left:907px;top:0;width:1px;height:23px;background:#dbe5f2"></div><div class="a" style="left:1026px;top:0;width:1px;height:23px;background:#dbe5f2"></div><div class="a" style="left:1229px;top:0;width:1px;height:23px;background:#dbe5f2"></div></div><div class="a" style="left:0;top:461px;width:1230px;height:24px;background:#fff"><div class="a" style="left:19px;top:0;width:1px;height:24px;background:#cdd9ec"></div><div class="a" style="left:20px;top:0;width:1210px;height:23px;background:#d4e3f8"></div><div class="a" style="left:0;top:23px;width:19px;height:1px;background:#dde6f3"></div><div class="a" style="left:39px;top:0;width:1px;height:23px;background:#e6eefb"></div><div class="a" style="left:19px;top:0;width:21px;height:23px"><svg class="a" style="left:7px;top:9px" width="8" height="6" viewBox="0 0 8 6"><path d="M.9 5 L4 1.700 L7.100 5" fill="none" stroke="#14264f" stroke-width="2.100"/></svg></div><div class="a" style="left:42px;top:0;line-height:24px;font-size:13px;white-space:pre;color:#1b1f2a"><span class="x" style="transform:scaleX(0.851)">SDFS SDFS</span></div></div><div class="a" style="left:0;top:485px;width:1230px;height:24px;background:#fff"><div class="a" style="left:19px;top:0;width:1px;height:24px;background:#cdd9ec"></div><div class="a" style="left:20px;top:0;width:20px;height:24px;background:#d4e3f8"></div><div class="a" style="left:0;top:23px;width:1230px;height:1px;background:#dde6f3"></div><div class="a" style="left:63px;top:0;width:1px;height:23px;background:#dbe5f2"></div><div class="a" style="left:182px;top:0;width:1px;height:23px;background:#dbe5f2"></div><div class="a" style="left:456px;top:0;width:1px;height:23px;background:#dbe5f2"></div><div class="a" style="left:575px;top:0;width:1px;height:23px;background:#dbe5f2"></div><div class="a" style="left:741px;top:0;width:1px;height:23px;background:#dbe5f2"></div><div class="a" style="left:907px;top:0;width:1px;height:23px;background:#dbe5f2"></div><div class="a" style="left:1026px;top:0;width:1px;height:23px;background:#dbe5f2"></div><div class="a" style="left:1229px;top:0;width:1px;height:23px;background:#dbe5f2"></div></div></div><div class="a gb" style="left:1592px;top:198px;width:317px;height:196px"></div><div class="a gt" style="left:1601px;top:192px;letter-spacing:-0.7px">PARTS ORDERED</div><div class="a grid" style="left:1594px;top:208px;width:314px;height:185px"><div class="a h" style="left:0px;width:20px"></div><div class="a h" style="left:20px;width:104px"><span class="xc" style="transform:scaleX(0.986)">Ticket #</span></div><div class="a h" style="left:124px;width:104px"><span class="xc" style="transform:scaleX(1.003)">Vendor</span></div><div class="a h" style="left:228px;width:84px"><span class="xc" style="transform:scaleX(0.941)">Promised  T...</span></div><div class="a r sel" style="top:29px;width:312px;height:23px"><div class="a c" style="left:0px;width:20px;height:23px"><svg class="a ar" width="7" height="8" viewBox="0 0 8 9"><path d="M0 3.300 H3 V.6 L7.400 4.500 L3 8.400 V5.700 H0 Z" fill="#12275c"/></svg></div><div class="a c foc" style="left:19px;width:105px;height:23px;padding-left:3px;line-height:20px"><span class="x" style="transform:scaleX(0.969)">10212020</span></div><div class="a c" style="left:124px;width:104px;height:23px"><span class="x" style="transform:scaleX(0.914)">ARRIGO  DOD...</span></div><div class="a c" style="left:228px;width:84px;height:23px"></div></div><div class="a r" style="top:52px;width:312px;height:23px"><div class="a c" style="left:0px;width:20px;height:23px"></div><div class="a c" style="left:20px;width:104px;height:23px"><span class="x" style="transform:scaleX(0.984)">Stock Order</span></div><div class="a c" style="left:124px;width:104px;height:23px"><span class="x" style="transform:scaleX(0.914)">ARRIGO  DOD...</span></div><div class="a c" style="left:228px;width:84px;height:23px"><span class="x" style="transform:scaleX(0.980)">7:30 AM</span></div></div></div><div class="a gb" style="left:1592px;top:409px;width:317px;height:196px"></div><div class="a gt" style="left:1601px;top:403px;letter-spacing:-0.51px">PARTS RETURN</div><div class="a grid" style="left:1594px;top:419px;width:314px;height:185px"><div class="a h" style="left:0px;width:20px"></div><div class="a h" style="left:20px;width:292px"><span class="xc" style="transform:scaleX(1.003)">Vendor</span></div><div class="a r sel" style="top:29px;width:312px;height:23px"><div class="a c" style="left:0px;width:20px;height:23px"><svg class="a ar" width="7" height="8" viewBox="0 0 8 9"><path d="M0 3.300 H3 V.6 L7.400 4.500 L3 8.400 V5.700 H0 Z" fill="#12275c"/></svg></div><div class="a c foc" style="left:19px;width:293px;height:23px;padding-left:3px;line-height:20px"><span class="x" style="transform:scaleX(0.909)">ARRIGO DODGE</span></div></div></div><div class="a gb" style="left:1592px;top:620px;width:317px;height:196px"></div><div class="a gt" style="left:1601px;top:614px;letter-spacing:-0.09px">FINISHED</div><div class="a grid" style="left:1594px;top:630px;width:314px;height:185px"><div class="a h" style="left:0px;width:20px"></div><div class="a h" style="left:20px;width:20px"></div><div class="a h" style="left:40px;width:63px"><span class="xc" style="transform:scaleX(0.986)">Ticket #</span></div><div class="a h" style="left:103px;width:52px"><span class="xc" style="transform:scaleX(0.915)">Year</span></div><div class="a h" style="left:155px;width:73px"><span class="xc" style="transform:scaleX(0.993)">Make</span></div><div class="a h" style="left:228px;width:84px"><span class="xc" style="transform:scaleX(1.042)">Model</span></div><div class="a r sel" style="top:29px;width:312px;height:23px"><div class="a c" style="left:0px;width:20px;height:23px"><svg class="a ar" width="7" height="8" viewBox="0 0 8 9"><path d="M0 3.300 H3 V.6 L7.400 4.500 L3 8.400 V5.700 H0 Z" fill="#12275c"/></svg></div><div class="a c focw" style="left:19px;width:21px;height:23px;padding-left:3px;line-height:20px"></div><div class="a c" style="left:40px;width:63px;height:23px"><span class="x" style="transform:scaleX(0.932)">102120...</span></div><div class="a c" style="left:103px;width:52px;height:23px"><span class="x" style="transform:scaleX(0.969)">2017</span></div><div class="a c" style="left:155px;width:73px;height:23px"><span class="x" style="transform:scaleX(0.958)">HYUNDAI</span></div><div class="a c" style="left:228px;width:84px;height:23px"><span class="x" style="transform:scaleX(0.969)">12313</span></div></div></div><div class="a gb" style="left:1593px;top:833px;width:316px;height:195px"></div><div class="a gt" style="left:1602px;top:827px;letter-spacing:0.08px">NOTIFICATION</div><div class="a grid" style="left:1595px;top:843px;width:313px;height:184px"><div class="a h" style="left:0px;width:20px"></div><div class="a h" style="left:20px;width:203px"><span class="xc" style="transform:scaleX(0.959)">Message</span></div><div class="a h" style="left:223px;width:70px"></div><div class="a r sel" style="top:29px;width:293px;height:23px"><div class="a c" style="left:0px;width:20px;height:23px"><svg class="a ar" width="7" height="8" viewBox="0 0 8 9"><path d="M0 3.300 H3 V.6 L7.400 4.500 L3 8.400 V5.700 H0 Z" fill="#12275c"/></svg></div><div class="a c foc" style="left:19px;width:204px;height:23px;padding-left:3px;line-height:20px"><span class="x" style="transform:scaleX(0.979)">WO 0 Invalid Customer Email</span></div><div class="a c" style="left:223px;width:70px;height:23px"></div></div><div class="a r" style="top:52px;width:293px;height:23px"><div class="a c" style="left:0px;width:20px;height:23px"></div><div class="a c" style="left:20px;width:203px;height:23px"><span class="x" style="transform:scaleX(0.979)">WO 0 Invalid Customer Email</span></div><div class="a c" style="left:223px;width:70px;height:23px"></div></div><div class="a r" style="top:75px;width:293px;height:23px"><div class="a c" style="left:0px;width:20px;height:23px"></div><div class="a c" style="left:20px;width:203px;height:23px"><span class="x" style="transform:scaleX(0.979)">WO 0 Invalid Customer Email</span></div><div class="a c" style="left:223px;width:70px;height:23px"></div></div><div class="a r" style="top:98px;width:293px;height:23px"><div class="a c" style="left:0px;width:20px;height:23px"></div><div class="a c" style="left:20px;width:203px;height:23px"><span class="x" style="transform:scaleX(0.979)">WO 0 Invalid Customer Email</span></div><div class="a c" style="left:223px;width:70px;height:23px"></div></div><div class="a r" style="top:121px;width:293px;height:23px"><div class="a c" style="left:0px;width:20px;height:23px"></div><div class="a c" style="left:20px;width:203px;height:23px"><span class="x" style="transform:scaleX(0.979)">WO 0 Invalid Customer Email</span></div><div class="a c" style="left:223px;width:70px;height:23px"></div></div><div class="a r" style="top:144px;width:293px;height:23px"><div class="a c" style="left:0px;width:20px;height:23px"></div><div class="a c" style="left:20px;width:203px;height:23px"><span class="x" style="transform:scaleX(0.979)">WO 0 Invalid Customer Email</span></div><div class="a c" style="left:223px;width:70px;height:23px"></div></div><div class="a r" style="top:167px;width:293px;height:23px"><div class="a c" style="left:0px;width:20px;height:23px"></div><div class="a c" style="left:20px;width:203px;height:23px"><span class="x" style="transform:scaleX(0.979)">WO 0 Invalid Customer Email</span></div><div class="a c" style="left:223px;width:70px;height:23px"></div></div><div class="a btn" style="left:224px;top:31px;width:67px;height:19px;border-radius:3px;font-size:13px;line-height:17px;color:#2b4a7c"><span class="xc" style="transform:scaleX(0.959)">Remove</span></div><div class="a btn" style="left:224px;top:54px;width:67px;height:19px;border-radius:3px;font-size:13px;line-height:17px;color:#2b4a7c"><span class="xc" style="transform:scaleX(0.959)">Remove</span></div><div class="a btn" style="left:224px;top:77px;width:67px;height:19px;border-radius:3px;font-size:13px;line-height:17px;color:#2b4a7c"><span class="xc" style="transform:scaleX(0.959)">Remove</span></div><div class="a btn" style="left:224px;top:100px;width:67px;height:19px;border-radius:3px;font-size:13px;line-height:17px;color:#2b4a7c"><span class="xc" style="transform:scaleX(0.959)">Remove</span></div><div class="a btn" style="left:224px;top:123px;width:67px;height:19px;border-radius:3px;font-size:13px;line-height:17px;color:#2b4a7c"><span class="xc" style="transform:scaleX(0.959)">Remove</span></div><div class="a btn" style="left:224px;top:146px;width:67px;height:19px;border-radius:3px;font-size:13px;line-height:17px;color:#2b4a7c"><span class="xc" style="transform:scaleX(0.959)">Remove</span></div><div class="a btn" style="left:224px;top:169px;width:67px;height:19px;border-radius:3px;font-size:13px;line-height:17px;color:#2b4a7c"><span class="xc" style="transform:scaleX(0.959)">Remove</span></div><div class="a sb" style="left:293px;top:0px;width:18px;height:182px"><svg class="a" style="left:5px;top:6px" width="8" height="4" viewBox="0 0 8 4"><path d="M0 4 L4 0 L8 4Z" fill="#2d3f63"/></svg><svg class="a" style="left:5px;top:171px" width="8" height="4" viewBox="0 0 8 4"><path d="M0 0 L4 4 L8 0Z" fill="#2d3f63"/></svg><div class="a th" style="left:0;top:18px;width:17px;height:61px"><div class="a" style="left:3px;top:27px;width:9px;height:1px;background:#7f97bd"></div><div class="a" style="left:3px;top:29px;width:9px;height:1px;background:#7f97bd"></div><div class="a" style="left:3px;top:31px;width:9px;height:1px;background:#7f97bd"></div></div></div></div><div class="a" style="left:508px;top:224px;width:903px;height:593px;border:1px solid #445e8d;border-radius:5px 5px 0 0;background:#bfd9fa;overflow:hidden"><div class="a" style="left:0;top:0;width:901px;height:26px;background:linear-gradient(#e2edfc 0,#dbe8fb 6px,#c4d5f6 7px,#cddcf8 14px,#dae5fa 21px,#e6eefc 26px)"></div><svg class="a" style="left:7px;top:6px" width="14" height="14" viewBox="0 0 15 15"><rect x="0.500" y="1.500" width="13" height="12" fill="#eef0f4" stroke="#c9ccd4" stroke-width=".6"/><rect x="6" y="1.600" width="7" height="7" fill="#f3cf48" stroke="#c89a26" stroke-width=".8"/><rect x="1.200" y="5.600" width="4" height="5" fill="#d23a35" stroke="#8e1c1a" stroke-width=".8"/><rect x="2.300" y="7" width="1.600" height="1.800" fill="#f6c9c6"/><rect x="6.200" y="9.800" width="5.200" height="3" fill="#5d8fe0" stroke="#3864b5" stroke-width=".6"/></svg><div class="a" style="left:24px;top:6px;font-size:11px;line-height:13px;color:#2f4f8f;white-space:pre;letter-spacing:-.6px">PHONE LIST</div><svg class="a" style="left:836px;top:5px" width="62" height="16" viewBox="0 0 62 16"><rect x="3" y="10" width="7" height="1.600" fill="#47536a"/><rect x="25.500" y="4.500" width="8" height="6" fill="none" stroke="#47536a" stroke-width="1"/><rect x="25" y="4" width="9" height="2" fill="#47536a"/><path d="M48.500 3 L56.500 11.500 M56.500 3 L48.500 11.500" stroke="#47536a" stroke-width="1.200" fill="none"/></svg><div class="a" style="left:3px;top:25px;width:895px;height:563px;border:1px solid #7a9ccb;background:#bfdbff"></div><div class="a" style="left:0;top:33px;width:115px;text-align:right;font-size:11px;line-height:14px;color:#1c2436;white-space:pre;"><span class="x" style="transform:scaleX(0.996)">Vendor Name</span></div><div class="a" style="left:0;top:61px;width:115px;text-align:right;font-size:11px;line-height:14px;color:#1c2436;white-space:pre;"><span class="x" style="transform:scaleX(0.983)">Vendor Type</span></div><div class="a" style="left:124px;top:28px;width:213px;height:23px;background:#fff;border:1px solid #b3cdf0"></div><div class="a" style="left:124px;top:59px;width:213px;height:26px;background:#fff;border:1px solid #b3cdf0"></div><div class="a" style="left:130px;top:65px;font-size:11px;line-height:14px;white-space:pre">All</div><div class="a" style="left:316px;top:63px;width:15px;height:17px;background:#d0e0f7"></div><svg class="a" style="left:321px;top:70px" width="6" height="4" viewBox="0 0 6 4"><path d="M0 0 H6 L3 3.500Z" fill="#2a3b5e"/></svg><div class="a" style="left:340px;top:36px;width:68px;text-align:right;font-size:11px;line-height:14px;color:#1c2436;white-space:pre;"><span class="x" style="transform:scaleX(0.966)">Specialty</span></div><div class="a" style="left:416px;top:32px;width:181px;height:25px;background:#fff;border:1px solid #b3cdf0"></div><div class="a" style="left:422px;top:37px;font-size:11px;line-height:14px;white-space:pre">All</div><div class="a" style="left:576px;top:36px;width:15px;height:16px;background:#d0e0f7"></div><svg class="a" style="left:581px;top:42px" width="6" height="4" viewBox="0 0 6 4"><path d="M0 0 H6 L3 3.500Z" fill="#2a3b5e"/></svg><div class="a btn" style="left:124px;top:110px;width:83px;height:37px;font-size:11px;line-height:35px"><span class="xc" style="transform:scaleX(0.938)">Clear</span></div><div class="a btn" style="left:212px;top:110px;width:83px;height:37px;font-size:11px;line-height:35px"><span class="xc" style="transform:scaleX(0.928)">Search</span></div><div class="a btn" style="left:300px;top:110px;width:83px;height:37px;font-size:11px;line-height:35px"><span class="xc" style="transform:scaleX(0.936)">Close</span></div><div class="a" style="left:4px;top:152px;width:893px;height:409px;border-top:1px solid #5f82b6;border-bottom:1px solid #5f82b6;background:#fff;overflow:hidden"><div class="a h" style="left:0px;width:20px;font-size:11px;line-height:31px;height:30px"></div><div class="a h" style="left:20px;width:233px;font-size:11px;line-height:31px;height:30px"><span class="xc" style="transform:scaleX(0.990)">Name</span></div><div class="a h" style="left:253px;width:156px;font-size:11px;line-height:31px;height:30px"><span class="xc" style="transform:scaleX(0.966)">Specialty</span></div><div class="a h" style="left:409px;width:156px;font-size:11px;line-height:31px;height:30px"><span class="xc" style="transform:scaleX(0.978)">City</span></div><div class="a h" style="left:565px;width:156px;font-size:11px;line-height:31px;height:30px"><span class="xc" style="transform:scaleX(0.969)">Phone</span></div><div class="a h" style="left:721px;width:155px;font-size:11px;line-height:31px;height:30px"><span class="xc" style="transform:scaleX(0.873)">Fax</span></div><div class="a r sel" style="top:30px;width:876px;height:23px"><div class="a c" style="left:0px;width:20px;font-size:11px;letter-spacing:0;line-height:22px"><svg class="a ar" width="7" height="8" viewBox="0 0 8 9"><path d="M0 3.300 H3 V.6 L7.400 4.500 L3 8.400 V5.700 H0 Z" fill="#12275c"/></svg></div><div class="a c foc" style="left:19px;width:234px;font-size:11px;letter-spacing:0;padding-left:3px;line-height:20px"><span class="x" style="transform:scaleX(0.915)">ACURA OF PALM BEACH</span></div><div class="a c" style="left:253px;width:156px;font-size:11px;letter-spacing:0;line-height:22px"><span class="x" style="transform:scaleX(0.912)">ACURA</span></div><div class="a c" style="left:409px;width:156px;font-size:11px;letter-spacing:0;line-height:22px"><span class="x" style="transform:scaleX(0.887)">WEST PALM_ BEACH_UP</span></div><div class="a c" style="left:565px;width:156px;font-size:11px;letter-spacing:0;line-height:22px"><span class="x" style="transform:scaleX(0.975)">(561) 686-0300</span></div><div class="a c" style="left:721px;width:155px;font-size:11px;letter-spacing:0;line-height:22px"></div></div><div class="a r" style="top:53px;width:876px;height:23px"><div class="a c" style="left:0px;width:20px;font-size:11px;letter-spacing:0;line-height:22px"></div><div class="a c" style="left:20px;width:233px;font-size:11px;letter-spacing:0;line-height:22px"><span class="x" style="transform:scaleX(0.915)">ACURA OF PALM BEACH</span></div><div class="a c" style="left:253px;width:156px;font-size:11px;letter-spacing:0;line-height:22px"><span class="x" style="transform:scaleX(0.912)">ACURA</span></div><div class="a c" style="left:409px;width:156px;font-size:11px;letter-spacing:0;line-height:22px"><span class="x" style="transform:scaleX(0.887)">WEST PALM_ BEACH_UP</span></div><div class="a c" style="left:565px;width:156px;font-size:11px;letter-spacing:0;line-height:22px"><span class="x" style="transform:scaleX(0.975)">(561) 686-0300</span></div><div class="a c" style="left:721px;width:155px;font-size:11px;letter-spacing:0;line-height:22px"></div></div><div class="a r" style="top:76px;width:876px;height:23px"><div class="a c" style="left:0px;width:20px;font-size:11px;letter-spacing:0;line-height:22px"></div><div class="a c" style="left:20px;width:233px;font-size:11px;letter-spacing:0;line-height:22px"><span class="x" style="transform:scaleX(0.915)">ACURA OF PALM BEACH</span></div><div class="a c" style="left:253px;width:156px;font-size:11px;letter-spacing:0;line-height:22px"><span class="x" style="transform:scaleX(0.912)">ACURA</span></div><div class="a c" style="left:409px;width:156px;font-size:11px;letter-spacing:0;line-height:22px"><span class="x" style="transform:scaleX(0.887)">WEST PALM_ BEACH_UP</span></div><div class="a c" style="left:565px;width:156px;font-size:11px;letter-spacing:0;line-height:22px"><span class="x" style="transform:scaleX(0.975)">(561) 686-0300</span></div><div class="a c" style="left:721px;width:155px;font-size:11px;letter-spacing:0;line-height:22px"></div></div><div class="a r" style="top:99px;width:876px;height:23px"><div class="a c" style="left:0px;width:20px;font-size:11px;letter-spacing:0;line-height:22px"></div><div class="a c" style="left:20px;width:233px;font-size:11px;letter-spacing:0;line-height:22px"><span class="x" style="transform:scaleX(0.928)">ACURA OF PALM BEACHNN</span></div><div class="a c" style="left:253px;width:156px;font-size:11px;letter-spacing:0;line-height:22px"></div><div class="a c" style="left:409px;width:156px;font-size:11px;letter-spacing:0;line-height:22px"><span class="x" style="transform:scaleX(0.997)">Amsterdam</span></div><div class="a c" style="left:565px;width:156px;font-size:11px;letter-spacing:0;line-height:22px"><span class="x" style="transform:scaleX(0.975)">(123) 123-1313</span></div><div class="a c" style="left:721px;width:155px;font-size:11px;letter-spacing:0;line-height:22px"></div></div><div class="a r" style="top:122px;width:876px;height:23px"><div class="a c" style="left:0px;width:20px;font-size:11px;letter-spacing:0;line-height:22px"></div><div class="a c" style="left:20px;width:233px;font-size:11px;letter-spacing:0;line-height:22px"><span class="x" style="transform:scaleX(0.899)">ADAPTIVE ONE BRAKE PADS</span></div><div class="a c" style="left:253px;width:156px;font-size:11px;letter-spacing:0;line-height:22px"></div><div class="a c" style="left:409px;width:156px;font-size:11px;letter-spacing:0;line-height:22px"></div><div class="a c" style="left:565px;width:156px;font-size:11px;letter-spacing:0;line-height:22px"></div><div class="a c" style="left:721px;width:155px;font-size:11px;letter-spacing:0;line-height:22px"></div></div><div class="a r" style="top:145px;width:876px;height:23px"><div class="a c" style="left:0px;width:20px;font-size:11px;letter-spacing:0;line-height:22px"></div><div class="a c" style="left:20px;width:233px;font-size:11px;letter-spacing:0;line-height:22px"><span class="x" style="transform:scaleX(0.913)">ADVANCE AUTO PARTS</span></div><div class="a c" style="left:253px;width:156px;font-size:11px;letter-spacing:0;line-height:22px"></div><div class="a c" style="left:409px;width:156px;font-size:11px;letter-spacing:0;line-height:22px"><span class="x" style="transform:scaleX(0.909)">ROYAL PALM BEACH</span></div><div class="a c" style="left:565px;width:156px;font-size:11px;letter-spacing:0;line-height:22px"><span class="x" style="transform:scaleX(0.975)">(561) 798-6888</span></div><div class="a c" style="left:721px;width:155px;font-size:11px;letter-spacing:0;line-height:22px"></div></div><div class="a r" style="top:168px;width:876px;height:23px"><div class="a c" style="left:0px;width:20px;font-size:11px;letter-spacing:0;line-height:22px"></div><div class="a c" style="left:20px;width:233px;font-size:11px;letter-spacing:0;line-height:22px"><span class="x" style="transform:scaleX(0.906)">AFFORDABLE TRANSMISSION</span></div><div class="a c" style="left:253px;width:156px;font-size:11px;letter-spacing:0;line-height:22px"></div><div class="a c" style="left:409px;width:156px;font-size:11px;letter-spacing:0;line-height:22px"><span class="x" style="transform:scaleX(0.880)">DELRAY BEACH</span></div><div class="a c" style="left:565px;width:156px;font-size:11px;letter-spacing:0;line-height:22px"><span class="x" style="transform:scaleX(0.975)">(561) 274-9288</span></div><div class="a c" style="left:721px;width:155px;font-size:11px;letter-spacing:0;line-height:22px"></div></div><div class="a r" style="top:191px;width:876px;height:23px"><div class="a c" style="left:0px;width:20px;font-size:11px;letter-spacing:0;line-height:22px"></div><div class="a c" style="left:20px;width:233px;font-size:11px;letter-spacing:0;line-height:22px"><span class="x" style="transform:scaleX(0.894)">AL PACKER FORD, INC</span></div><div class="a c" style="left:253px;width:156px;font-size:11px;letter-spacing:0;line-height:22px"></div><div class="a c" style="left:409px;width:156px;font-size:11px;letter-spacing:0;line-height:22px"><span class="x" style="transform:scaleX(0.902)">WEST PALM BEACH</span></div><div class="a c" style="left:565px;width:156px;font-size:11px;letter-spacing:0;line-height:22px"><span class="x" style="transform:scaleX(0.975)">(800) 272-9390</span></div><div class="a c" style="left:721px;width:155px;font-size:11px;letter-spacing:0;line-height:22px"></div></div><div class="a r" style="top:214px;width:876px;height:23px"><div class="a c" style="left:0px;width:20px;font-size:11px;letter-spacing:0;line-height:22px"></div><div class="a c" style="left:20px;width:233px;font-size:11px;letter-spacing:0;line-height:22px"><span class="x" style="transform:scaleX(0.879)">AL PACKER FORD, WEST</span></div><div class="a c" style="left:253px;width:156px;font-size:11px;letter-spacing:0;line-height:22px"></div><div class="a c" style="left:409px;width:156px;font-size:11px;letter-spacing:0;line-height:22px"><span class="x" style="transform:scaleX(0.909)">ROYAL PALM BEACH</span></div><div class="a c" style="left:565px;width:156px;font-size:11px;letter-spacing:0;line-height:22px"><span class="x" style="transform:scaleX(0.975)">(561) 790-1100</span></div><div class="a c" style="left:721px;width:155px;font-size:11px;letter-spacing:0;line-height:22px"></div></div><div class="a r" style="top:237px;width:876px;height:23px"><div class="a c" style="left:0px;width:20px;font-size:11px;letter-spacing:0;line-height:22px"></div><div class="a c" style="left:20px;width:233px;font-size:11px;letter-spacing:0;line-height:22px"><span class="x" style="transform:scaleX(0.918)">ALL DAY LOCKSMITH</span></div><div class="a c" style="left:253px;width:156px;font-size:11px;letter-spacing:0;line-height:22px"></div><div class="a c" style="left:409px;width:156px;font-size:11px;letter-spacing:0;line-height:22px"><span class="x" style="transform:scaleX(0.928)">BOCA RATON</span></div><div class="a c" style="left:565px;width:156px;font-size:11px;letter-spacing:0;line-height:22px"><span class="x" style="transform:scaleX(0.975)">(561) 577-4290</span></div><div class="a c" style="left:721px;width:155px;font-size:11px;letter-spacing:0;line-height:22px"></div></div><div class="a r" style="top:260px;width:876px;height:23px"><div class="a c" style="left:0px;width:20px;font-size:11px;letter-spacing:0;line-height:22px"></div><div class="a c" style="left:20px;width:233px;font-size:11px;letter-spacing:0;line-height:22px"><span class="x" style="transform:scaleX(0.899)">AMERICAN TIRE DISTRIBUTOR</span></div><div class="a c" style="left:253px;width:156px;font-size:11px;letter-spacing:0;line-height:22px"></div><div class="a c" style="left:409px;width:156px;font-size:11px;letter-spacing:0;line-height:22px"><span class="x" style="transform:scaleX(0.909)">ROYAL PALM BEACH</span></div><div class="a c" style="left:565px;width:156px;font-size:11px;letter-spacing:0;line-height:22px"><span class="x" style="transform:scaleX(0.975)">(800) 950-5589</span></div><div class="a c" style="left:721px;width:155px;font-size:11px;letter-spacing:0;line-height:22px"></div></div><div class="a r" style="top:283px;width:876px;height:23px"><div class="a c" style="left:0px;width:20px;font-size:11px;letter-spacing:0;line-height:22px"></div><div class="a c" style="left:20px;width:233px;font-size:11px;letter-spacing:0;line-height:22px"><span class="x" style="transform:scaleX(0.899)">AMERICAN TIRE DISTRIBUTOR</span></div><div class="a c" style="left:253px;width:156px;font-size:11px;letter-spacing:0;line-height:22px"></div><div class="a c" style="left:409px;width:156px;font-size:11px;letter-spacing:0;line-height:22px"><span class="x" style="transform:scaleX(0.909)">ROYAL PALM BEACH</span></div><div class="a c" style="left:565px;width:156px;font-size:11px;letter-spacing:0;line-height:22px"><span class="x" style="transform:scaleX(0.975)">(800) 950-5589</span></div><div class="a c" style="left:721px;width:155px;font-size:11px;letter-spacing:0;line-height:22px"></div></div><div class="a r" style="top:306px;width:876px;height:23px"><div class="a c" style="left:0px;width:20px;font-size:11px;letter-spacing:0;line-height:22px"></div><div class="a c" style="left:20px;width:233px;font-size:11px;letter-spacing:0;line-height:22px"><span class="x" style="transform:scaleX(0.899)">AMERICAN TIRE DISTRIBUTOR</span></div><div class="a c" style="left:253px;width:156px;font-size:11px;letter-spacing:0;line-height:22px"></div><div class="a c" style="left:409px;width:156px;font-size:11px;letter-spacing:0;line-height:22px"><span class="x" style="transform:scaleX(0.909)">ROYAL PALM BEACH</span></div><div class="a c" style="left:565px;width:156px;font-size:11px;letter-spacing:0;line-height:22px"><span class="x" style="transform:scaleX(0.975)">(800) 950-5589</span></div><div class="a c" style="left:721px;width:155px;font-size:11px;letter-spacing:0;line-height:22px"></div></div><div class="a r" style="top:329px;width:876px;height:23px"><div class="a c" style="left:0px;width:20px;font-size:11px;letter-spacing:0;line-height:22px"></div><div class="a c" style="left:20px;width:233px;font-size:11px;letter-spacing:0;line-height:22px"><span class="x" style="transform:scaleX(0.905)">AUDI CORAL SPRINGS</span></div><div class="a c" style="left:253px;width:156px;font-size:11px;letter-spacing:0;line-height:22px"></div><div class="a c" style="left:409px;width:156px;font-size:11px;letter-spacing:0;line-height:22px"><span class="x" style="transform:scaleX(0.885)">CORAL SPRINGS</span></div><div class="a c" style="left:565px;width:156px;font-size:11px;letter-spacing:0;line-height:22px"><span class="x" style="transform:scaleX(0.975)">(954) 509-8960</span></div><div class="a c" style="left:721px;width:155px;font-size:11px;letter-spacing:0;line-height:22px"><span class="x" style="transform:scaleX(0.975)">(954) 509-8962</span></div></div><div class="a r" style="top:352px;width:876px;height:23px"><div class="a c" style="left:0px;width:20px;font-size:11px;letter-spacing:0;line-height:22px"></div><div class="a c" style="left:20px;width:233px;font-size:11px;letter-spacing:0;line-height:22px"><span class="x" style="transform:scaleX(0.915)">AUDI OF WEST PALM BEACH</span></div><div class="a c" style="left:253px;width:156px;font-size:11px;letter-spacing:0;line-height:22px"></div><div class="a c" style="left:409px;width:156px;font-size:11px;letter-spacing:0;line-height:22px"><span class="x" style="transform:scaleX(0.902)">WEST PALM BEACH</span></div><div class="a c" style="left:565px;width:156px;font-size:11px;letter-spacing:0;line-height:22px"><span class="x" style="transform:scaleX(0.975)">(561) 615-4175</span></div><div class="a c" style="left:721px;width:155px;font-size:11px;letter-spacing:0;line-height:22px"></div></div><div class="a r" style="top:375px;width:876px;height:23px"><div class="a c" style="left:0px;width:20px;font-size:11px;letter-spacing:0;line-height:22px"></div><div class="a c" style="left:20px;width:233px;font-size:11px;letter-spacing:0;line-height:22px"><span class="x" style="transform:scaleX(0.940)">AUTO NATION CADILLAC</span></div><div class="a c" style="left:253px;width:156px;font-size:11px;letter-spacing:0;line-height:22px"></div><div class="a c" style="left:409px;width:156px;font-size:11px;letter-spacing:0;line-height:22px"><span class="x" style="transform:scaleX(0.902)">WEST PALM BEACH</span></div><div class="a c" style="left:565px;width:156px;font-size:11px;letter-spacing:0;line-height:22px"><span class="x" style="transform:scaleX(0.975)">(561) 845-5500</span></div><div class="a c" style="left:721px;width:155px;font-size:11px;letter-spacing:0;line-height:22px"></div></div><div class="a r" style="top:398px;width:876px;height:23px"><div class="a c" style="left:0px;width:20px;font-size:11px;letter-spacing:0;line-height:22px"></div><div class="a c" style="left:20px;width:233px;font-size:11px;letter-spacing:0;line-height:22px"><span class="x" style="transform:scaleX(0.919)">AUTO NATION CHEVROLET</span></div><div class="a c" style="left:253px;width:156px;font-size:11px;letter-spacing:0;line-height:22px"></div><div class="a c" style="left:409px;width:156px;font-size:11px;letter-spacing:0;line-height:22px"><span class="x" style="transform:scaleX(0.849)">GREENACRES</span></div><div class="a c" style="left:565px;width:156px;font-size:11px;letter-spacing:0;line-height:22px"><span class="x" style="transform:scaleX(0.975)">(561) 433-5757</span></div><div class="a c" style="left:721px;width:155px;font-size:11px;letter-spacing:0;line-height:22px"></div></div><div class="a sb" style="left:876px;top:0px;width:17px;height:407px"><svg class="a" style="left:4px;top:6px" width="8" height="4" viewBox="0 0 8 4"><path d="M0 4 L4 0 L8 4Z" fill="#2d3f63"/></svg><svg class="a" style="left:4px;top:394px" width="8" height="4" viewBox="0 0 8 4"><path d="M0 0 L4 4 L8 0Z" fill="#2d3f63"/></svg><div class="a th" style="left:0;top:18px;width:16px;height:65px"><div class="a" style="left:3px;top:29px;width:8px;height:1px;background:#7f97bd"></div><div class="a" style="left:3px;top:31px;width:8px;height:1px;background:#7f97bd"></div><div class="a" style="left:3px;top:33px;width:8px;height:1px;background:#7f97bd"></div></div></div></div></div></body></html>
